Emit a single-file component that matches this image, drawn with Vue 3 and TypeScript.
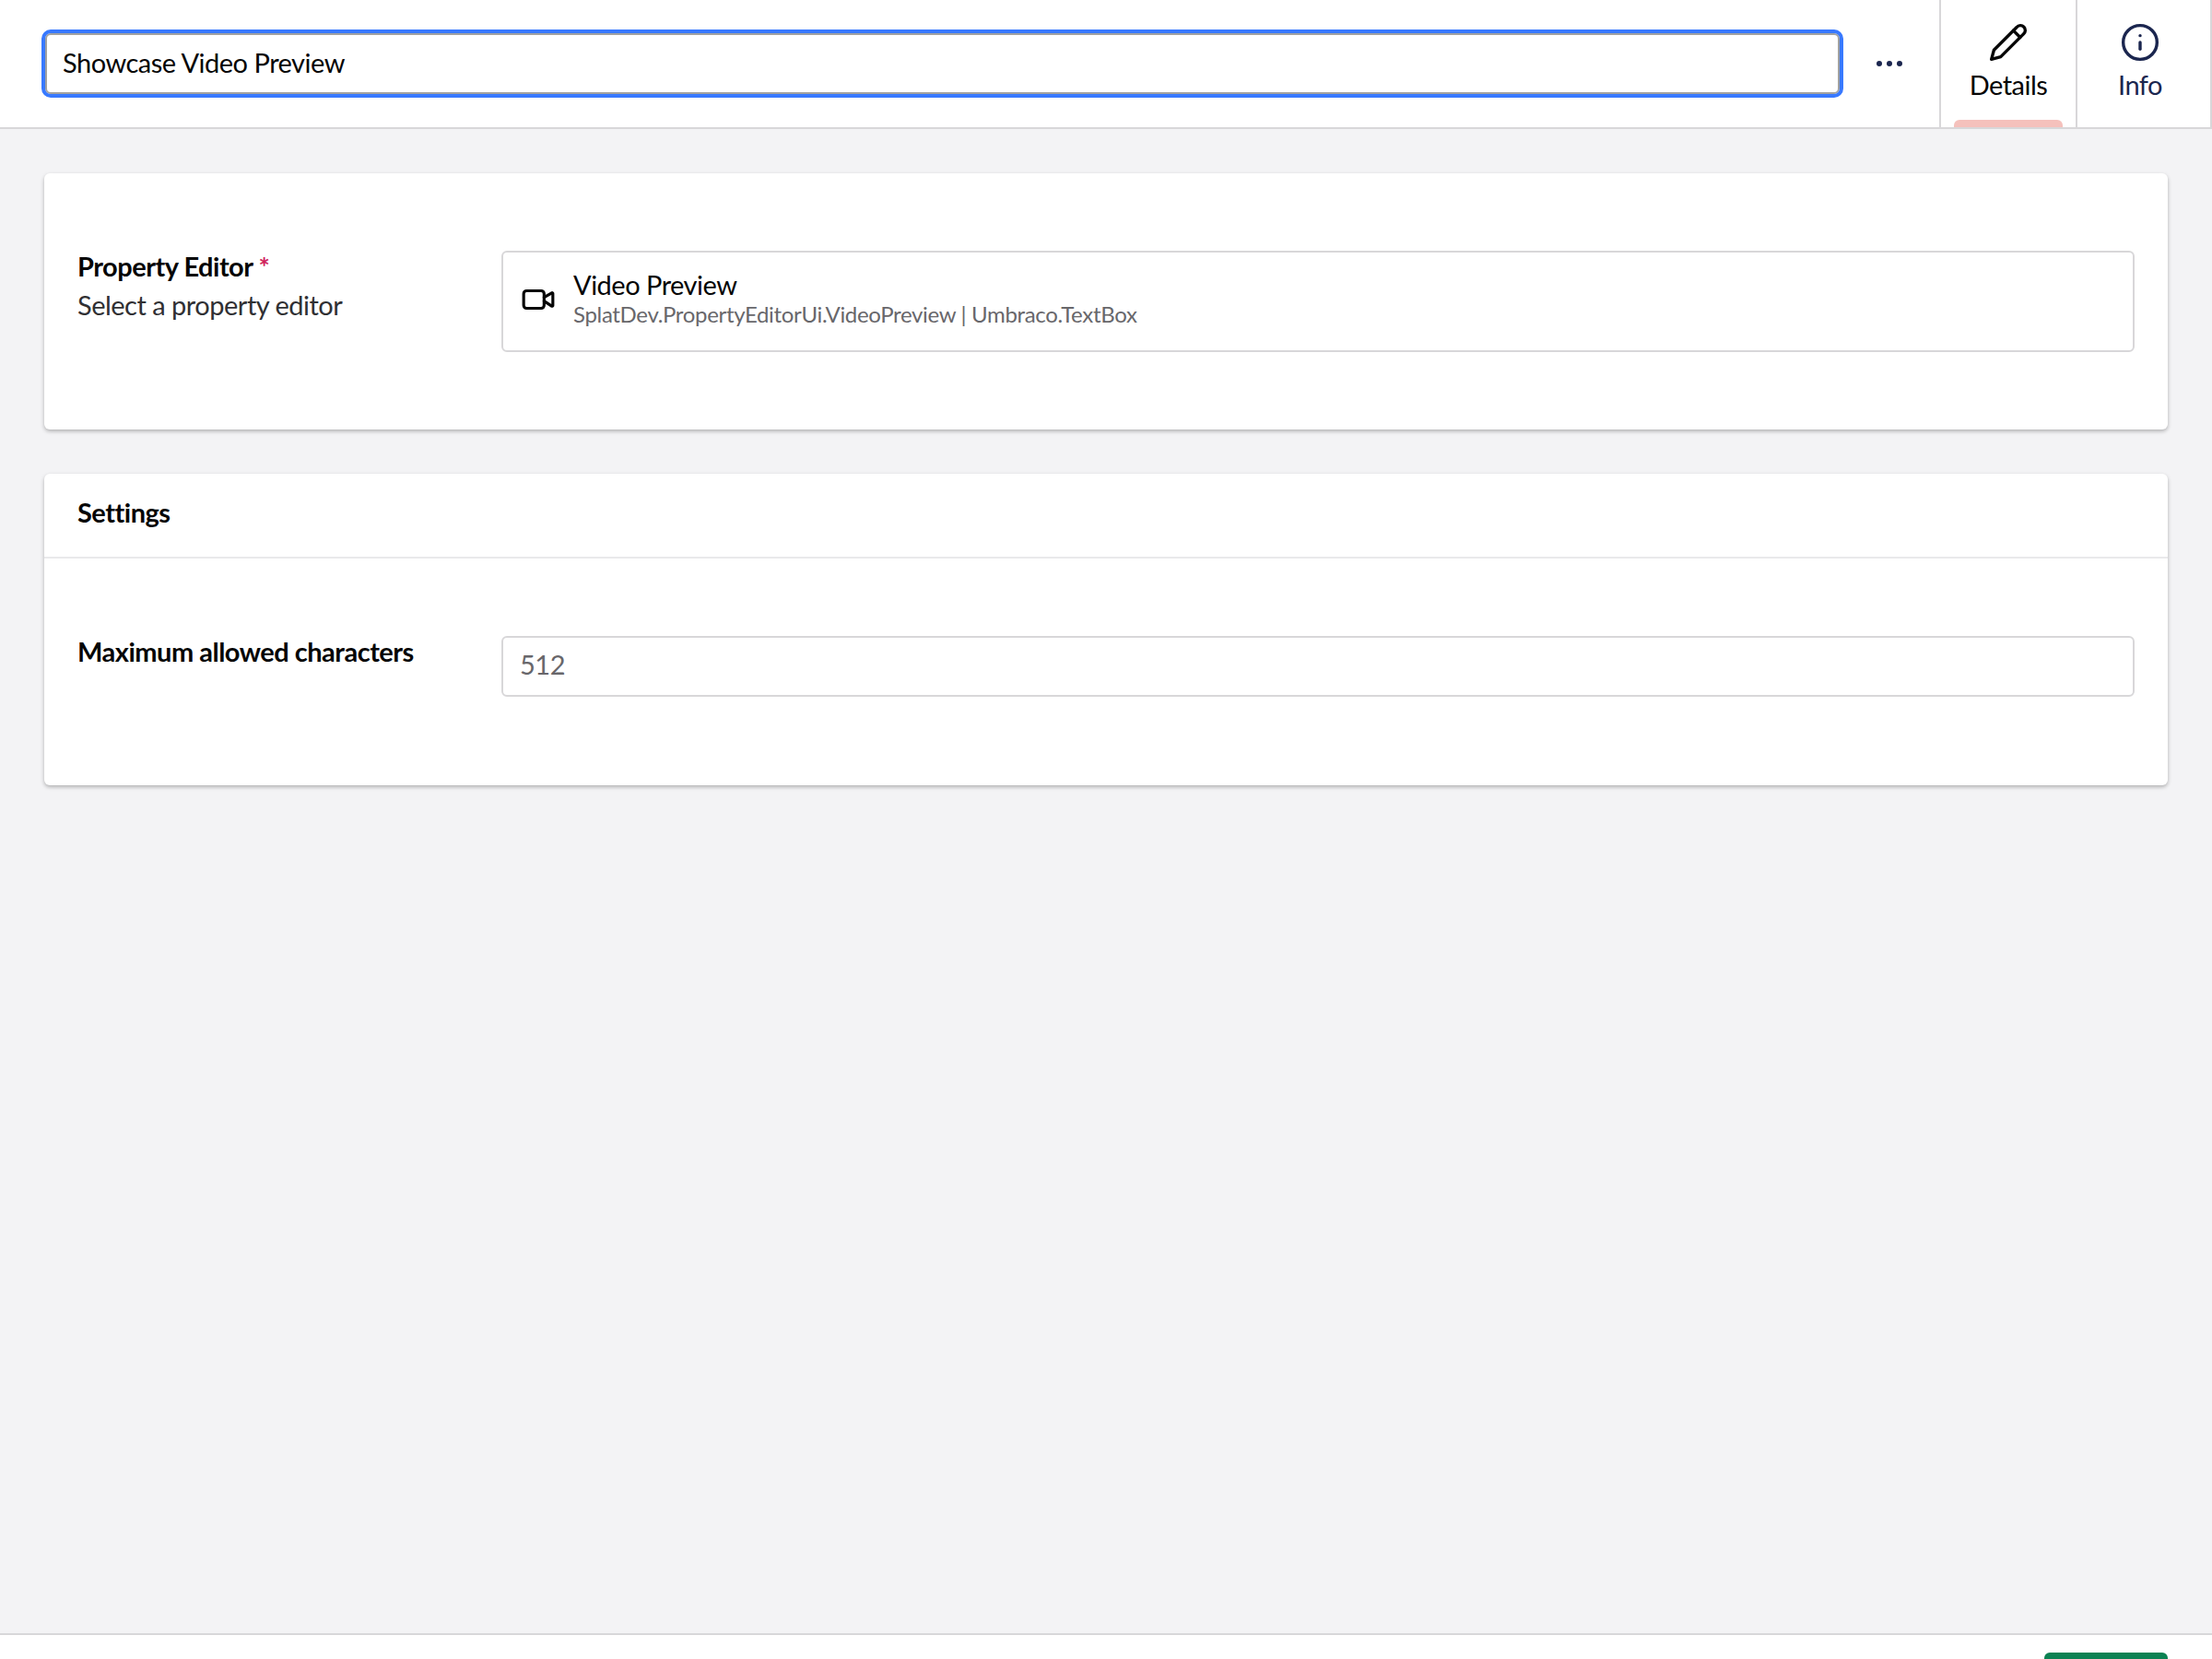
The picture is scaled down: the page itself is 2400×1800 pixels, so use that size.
<template>
  <div class="page">
    <header class="top-bar">
      <div class="name-wrap">
        <input v-model="name" class="name-input" type="text" />
      </div>
      <button class="more-btn" type="button" aria-label="More">
        <span></span><span></span><span></span>
      </button>
      <nav class="tabs">
        <a class="tab active">
          <svg class="tab-icon" viewBox="0 0 24 24">
            <path d="M17 3a2.85 2.83 0 1 1 4 4L7.5 20.5 2 22l1.5-5.5Z" />
            <path d="m15 5 4 4" />
          </svg>
          <span>Details</span>
        </a>
        <a class="tab">
          <svg class="tab-icon" viewBox="0 0 24 24">
            <circle cx="12" cy="12" r="10" />
            <path d="M12 16v-4" />
            <path d="M12 8h.01" />
          </svg>
          <span>Info</span>
        </a>
      </nav>
    </header>

    <main class="content">
      <section class="card">
        <div class="prop-row">
          <div class="prop-label">
            <div class="label-title">Property Editor <span class="required">*</span></div>
            <div class="label-desc">Select a property editor</div>
          </div>
          <div class="picker">
            <svg class="picker-icon" viewBox="0 0 24 24">
              <path d="m16 13 5.223 3.482a.5.5 0 0 0 .777-.416V7.87a.5.5 0 0 0-.752-.432L16 10.5" />
              <rect x="2" y="6" width="14" height="12" rx="2" />
            </svg>
            <div class="picker-text">
              <div class="picker-name">Video Preview</div>
              <div class="picker-alias">SplatDev.PropertyEditorUi.VideoPreview | Umbraco.TextBox</div>
            </div>
          </div>
        </div>
      </section>

      <section class="card">
        <h2 class="card-head">Settings</h2>
        <div class="prop-row settings-row">
          <div class="prop-label">
            <div class="label-title">Maximum allowed characters</div>
          </div>
          <input class="num-input" type="text" placeholder="512" />
        </div>
      </section>
    </main>

    <footer class="bottom-bar">
      <div class="save-btn"></div>
    </footer>
  </div>
</template>

<script setup lang="ts">
import { ref } from 'vue'

const name = ref('Showcase Video Preview')
</script>

<style>
html,
body {
  margin: 0;
  background: #f3f3f5;
}
</style>

<style scoped>
.page {
  height: 100vh;
  display: flex;
  flex-direction: column;
  overflow: hidden;
  font-family: Lato, 'Noto Sans', sans-serif;
  font-size: 29px;
  letter-spacing: -0.5px;
  color: #060606;
  background: #f3f3f5;
}

.top-bar {
  height: 140px;
  flex-shrink: 0;
  box-sizing: border-box;
  display: flex;
  align-items: stretch;
  background: #fff;
  border-bottom: 2px solid #d8d7d9;
}

.name-wrap {
  flex: 1;
  display: flex;
  align-items: center;
  padding-left: 49px;
}

.name-input {
  width: 100%;
  height: 66px;
  box-sizing: border-box;
  padding: 0 18px 4px 17px;
  border: 2px solid #a1a1a1;
  border-radius: 6px;
  outline: 4px solid #3879ff;
  font: inherit;
  letter-spacing: inherit;
  color: #060606;
  background: #fff;
}

.more-btn {
  width: 100px;
  margin-left: 4px;
  margin-right: 4px;
  flex-shrink: 0;
  display: flex;
  align-items: center;
  justify-content: center;
  gap: 5px;
  border: 0;
  padding: 0;
  background: none;
}

.more-btn span {
  width: 6px;
  height: 6px;
  border-radius: 50%;
  background: #1b264f;
}

.tabs {
  display: flex;
  flex-shrink: 0;
}

.tab {
  position: relative;
  box-sizing: border-box;
  display: flex;
  flex-direction: column;
  align-items: center;
  padding-top: 24px;
  line-height: 40px;
  color: #1b264f;
  border-left: 2px solid #d8d7d9;
  width: 148px;
}

.tab:last-child {
  width: 148px;
  padding-right: 8px;
  border-right: 2px solid #d8d7d9;
}

.tab.active {
  color: #060606;
}

.tab.active::after {
  content: '';
  position: absolute;
  left: 14px;
  right: 14px;
  bottom: 0;
  height: 8px;
  border-radius: 6px 6px 0 0;
  background: #f5c1bc;
}

.tab-icon {
  width: 44px;
  height: 44px;
  margin-bottom: 4px;
  fill: none;
  stroke: currentColor;
  stroke-width: 1.85;
  stroke-linecap: round;
  stroke-linejoin: round;
}

.content {
  flex: 1;
  min-height: 0;
  padding: 48px;
  display: flex;
  flex-direction: column;
  gap: 48px;
}

.card {
  background: #fff;
  border-radius: 6px;
  box-shadow: 0 2px 4px rgba(0, 0, 0, 0.28);
}

.card-head {
  margin: 0;
  height: 92px;
  box-sizing: border-box;
  display: flex;
  align-items: center;
  padding: 0 36px 7px;
  font-size: 29px;
  font-weight: 700;
  border-bottom: 2px solid #e9e9eb;
}

.prop-row {
  display: grid;
  grid-template-columns: 460px 1fr;
  padding: 84px 36px 84px;
}

.settings-row {
  padding: 84px 36px 96px;
}

.prop-label {
  line-height: 42px;
  margin-top: -4px;
}

.label-title {
  font-weight: 700;
}

.required {
  color: #cf1f5a;
}

.label-desc {
  color: #303033;
}

.picker {
  height: 110px;
  box-sizing: border-box;
  display: flex;
  align-items: center;
  gap: 19px;
  padding: 0 19px;
  border: 2px solid #d8d7d9;
  border-radius: 6px;
}

.picker-icon {
  width: 38px;
  height: 38px;
  flex-shrink: 0;
  margin-top: -5px;
  fill: none;
  stroke: #060606;
  stroke-width: 2;
  stroke-linecap: round;
  stroke-linejoin: round;
}

.picker-text {
  margin-top: -6px;
}

.picker-name {
  line-height: 34px;
}

.picker-alias {
  font-size: 24px;
  letter-spacing: -0.33px;
  line-height: 30px;
  color: #68676b;
}

.num-input {
  height: 66px;
  box-sizing: border-box;
  padding: 0 18px 6px;
  border: 2px solid #d8d7d9;
  border-radius: 6px;
  outline: none;
  font: inherit;
  letter-spacing: inherit;
  color: #060606;
  background: #fff;
}

.num-input::placeholder {
  color: #68676b;
  opacity: 1;
}

.bottom-bar {
  height: 28px;
  flex-shrink: 0;
  box-sizing: border-box;
  display: flex;
  justify-content: flex-end;
  padding: 19px 48px 0;
  overflow: hidden;
  background: #fff;
  border-top: 2px solid #d8d7d9;
}

.save-btn {
  width: 134px;
  height: 72px;
  border-radius: 6px;
  background: #0b8152;
}
</style>
